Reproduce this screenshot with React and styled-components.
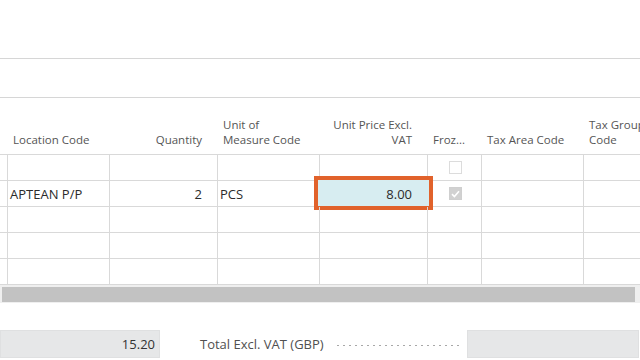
import React from "react";
import styled, { createGlobalStyle } from "styled-components";

const Global = createGlobalStyle`
  html, body { margin: 0; padding: 0; background: #fff; }
  body { font-family: "Open Sans", "Noto Sans", sans-serif; color: #2b2b2b; }
`;

const COLS = "8px 102px 108px 102px 108px 54px 102px 102px";

const Page = styled.div`
  width: 640px;
  height: 360px;
  overflow: hidden;
  display: flex;
  flex-direction: column;
`;

const Band = styled.div`
  height: ${(p) => p.$h}px;
  flex: none;
  border-bottom: 1px solid #d6d6d6;
`;

const Table = styled.div`
  display: flex;
  flex-direction: column;
  width: 688px;
  flex: none;
`;

const Row = styled.div`
  display: grid;
  grid-template-columns: ${COLS};
  height: ${(p) => p.$h}px;
  border-bottom: 1px solid #d9d9d9;
  box-sizing: border-box;
`;

const HeadCell = styled.div`
  display: flex;
  flex-direction: column;
  justify-content: flex-end;
  align-items: ${(p) => (p.$right ? "flex-end" : "flex-start")};
  text-align: ${(p) => (p.$right ? "right" : "left")};
  padding: 0 ${(p) => (p.$right ? "16px" : "0")} 7px ${(p) => (p.$right ? "0" : "5px")};
  font-size: 11.5px;
  line-height: 15px;
  color: #555;
  white-space: nowrap;
  overflow: hidden;
`;

const Cell = styled.div`
  position: relative;
  display: flex;
  align-items: center;
  justify-content: ${(p) => (p.$right ? "flex-end" : p.$center ? "center" : "flex-start")};
  padding: ${(p) => (p.$right ? "0 15px 0 0" : p.$center ? "0" : "0 0 0 2px")};
  border-right: 1px solid #d9d9d9;
  font-size: 13px;
  color: #2b2b2b;
  white-space: nowrap;
`;

const Focus = styled.div`
  position: absolute;
  left: -2px;
  right: -2px;
  top: -1px;
  bottom: 0;
  background: #d7edf1;
  box-shadow: 0 0 0 4px #e1622b;
  z-index: 0;
`;

const CellText = styled.span`
  position: relative;
  z-index: 1;
`;

const Check = styled.div`
  width: 13px;
  height: 13px;
  box-sizing: border-box;
  border: 1px solid ${(p) => (p.$on ? "#cfcfcf" : "#dcdcdc")};
  background: ${(p) => (p.$on ? "#d1d1d1" : "#fff")};
  display: flex;
  align-items: center;
  justify-content: center;
  margin-left: 2px;
`;

const Scroll = styled.div`
  height: 18px;
  background: #efefef;
  padding: 2px 5px 1px 2px;
  box-sizing: border-box;
  flex: none;
`;

const Thumb = styled.div`
  height: 100%;
  background: #c2c2c2;
`;

const Totals = styled.div`
  margin-top: 27px;
  display: flex;
  align-items: center;
  height: 28px;
  flex: none;
`;

const TotalBox = styled.div`
  width: ${(p) => p.$w}px;
  height: 28px;
  box-sizing: border-box;
  background: #e6e7e8;
  border: 1px solid #dfe0e1;
  display: flex;
  align-items: center;
  justify-content: flex-end;
  padding-right: 4px;
  font-size: 13px;
  color: #333;
  flex: none;
`;

const TotalLabel = styled.div`
  margin-left: 40px;
  font-size: 13px;
  color: #505050;
  white-space: nowrap;
`;

const Dots = styled.div`
  width: 122px;
  height: 1px;
  margin: 3px 8px 0 13px;
  background-image: repeating-linear-gradient(
    to right,
    #a8a8a8 0,
    #a8a8a8 2px,
    transparent 2px,
    transparent 6px
  );
  flex: none;
`;

const headers = [
  { t: "", r: false },
  { t: "Location Code", r: false },
  { t: "Quantity", r: true },
  { t: ["Unit of", "Measure Code"], r: false },
  { t: ["Unit Price Excl.", "VAT"], r: true },
  { t: "Froz...", r: false },
  { t: "Tax Area Code", r: false },
  { t: ["Tax Group", "Code"], r: false },
];

function CheckMark() {
  return (
    <svg width="9" height="8" viewBox="0 0 9 8">
      <path d="M1 4.2 L3.4 6.5 L8 1.2" fill="none" stroke="#fff" strokeWidth="1.6" />
    </svg>
  );
}

function EmptyRow() {
  return (
    <Row $h={26}>
      {Array.from({ length: 8 }).map((_, i) => (
        <Cell key={i} />
      ))}
    </Row>
  );
}

export default function App() {
  return (
    <Page>
      <Global />
      <Band $h={58} />
      <Band $h={38} />
      <Table>
        <Row $h={57}>
          {headers.map((h, i) => (
            <HeadCell key={i} $right={h.r}>
              {Array.isArray(h.t) ? h.t.map((l) => <span key={l}>{l}</span>) : h.t}
            </HeadCell>
          ))}
        </Row>
        <Row $h={26}>
          <Cell />
          <Cell />
          <Cell />
          <Cell />
          <Cell />
          <Cell $center>
            <Check />
          </Cell>
          <Cell />
          <Cell />
        </Row>
        <Row $h={26}>
          <Cell />
          <Cell>APTEAN P/P</Cell>
          <Cell $right>2</Cell>
          <Cell>PCS</Cell>
          <Cell $right>
            <Focus />
            <CellText>8.00</CellText>
          </Cell>
          <Cell $center>
            <Check $on>
              <CheckMark />
            </Check>
          </Cell>
          <Cell />
          <Cell />
        </Row>
        <EmptyRow />
        <EmptyRow />
        <EmptyRow />
      </Table>
      <Scroll>
        <Thumb />
      </Scroll>
      <Totals>
        <TotalBox $w={160}>15.20</TotalBox>
        <TotalLabel>Total Excl. VAT (GBP)</TotalLabel>
        <Dots />
        <TotalBox $w={172} />
      </Totals>
    </Page>
  );
}
